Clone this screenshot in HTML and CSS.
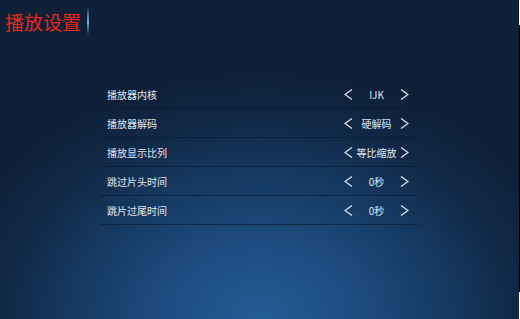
FILE: index.html
```html
<!DOCTYPE html>
<html lang="zh-CN">
<head>
<meta charset="utf-8">
<title>播放设置</title>
<link rel="stylesheet" href="styles.css">
</head>
<body>
<div class="screen">
  <main class="panel">
    <header class="titlebar">
      <h1 class="title">播放设置</h1>
      <span class="divider"></span>
    </header>
    <ul class="settings">
      <li class="row">
        <span class="label">播放器内核</span>
        <span class="control">
          <svg class="arrow" viewBox="0 0 9 11" width="9" height="11"><polyline points="8,0.5 1,5.5 8,10.5"/></svg>
          <span class="value">IJK</span>
          <svg class="arrow" viewBox="0 0 9 11" width="9" height="11"><polyline points="1,0.5 8,5.5 1,10.5"/></svg>
        </span>
      </li>
      <li class="row">
        <span class="label">播放器解码</span>
        <span class="control">
          <svg class="arrow" viewBox="0 0 9 11" width="9" height="11"><polyline points="8,0.5 1,5.5 8,10.5"/></svg>
          <span class="value">硬解码</span>
          <svg class="arrow" viewBox="0 0 9 11" width="9" height="11"><polyline points="1,0.5 8,5.5 1,10.5"/></svg>
        </span>
      </li>
      <li class="row">
        <span class="label">播放显示比列</span>
        <span class="control">
          <svg class="arrow" viewBox="0 0 9 11" width="9" height="11"><polyline points="8,0.5 1,5.5 8,10.5"/></svg>
          <span class="value">等比缩放</span>
          <svg class="arrow" viewBox="0 0 9 11" width="9" height="11"><polyline points="1,0.5 8,5.5 1,10.5"/></svg>
        </span>
      </li>
      <li class="row">
        <span class="label">跳过片头时间</span>
        <span class="control">
          <svg class="arrow" viewBox="0 0 9 11" width="9" height="11"><polyline points="8,0.5 1,5.5 8,10.5"/></svg>
          <span class="value">0秒</span>
          <svg class="arrow" viewBox="0 0 9 11" width="9" height="11"><polyline points="1,0.5 8,5.5 1,10.5"/></svg>
        </span>
      </li>
      <li class="row">
        <span class="label">跳片过尾时间</span>
        <span class="control">
          <svg class="arrow" viewBox="0 0 9 11" width="9" height="11"><polyline points="8,0.5 1,5.5 8,10.5"/></svg>
          <span class="value">0秒</span>
          <svg class="arrow" viewBox="0 0 9 11" width="9" height="11"><polyline points="1,0.5 8,5.5 1,10.5"/></svg>
        </span>
      </li>
    </ul>
  </main>
  <div class="edge">
    <span class="edge-top"></span>
    <span class="edge-mid"></span>
    <span class="edge-bottom"></span>
  </div>
</div>
</body>
</html>
```

FILE: styles.css
```css
html, body {
  margin: 0;
  padding: 0;
  background: #0e1f38;
}

.screen {
  display: flex;
  width: 520px;
  height: 319px;
  overflow: hidden;
  font-family: "Noto Sans CJK SC", "Noto Sans", sans-serif;
  background:
    radial-gradient(ellipse 62% 78% at 50% 100%, #225c92 0%, #1c4d7e 30%, #163b65 55%, #102846 80%, rgba(14,31,56,0) 100%),
    #0e1f38;
}

.panel {
  flex: 1;
  display: flex;
  flex-direction: column;
}

.titlebar {
  display: flex;
  align-items: center;
  height: 28px;
  padding: 7px 0 0 5px;
}

.title {
  margin: 0;
  font-size: 19px;
  line-height: 1;
  font-weight: normal;
  color: #e8281a;
}

.divider {
  width: 1.5px;
  height: 28px;
  margin-left: 6px;
  background: linear-gradient(to bottom, rgba(110,180,235,0) 0%, rgba(100,170,225,0.75) 35%, rgba(130,195,240,0.85) 55%, rgba(110,180,235,0) 100%);
}

.settings {
  list-style: none;
  margin: 45px 0 0 100px;
  padding: 0;
  width: 318px;
}

.row {
  display: flex;
  align-items: center;
  justify-content: space-between;
  height: 28px;
  padding: 0 9px 0 7px;
  border-bottom: 1px solid rgba(10, 22, 42, 0.6);
}

.label {
  font-size: 10px;
  color: #e3e7ed;
}

.control {
  display: flex;
  align-items: center;
}

.arrow {
  display: block;
  fill: none;
  stroke: #dfe3e9;
  stroke-width: 1.3;
}

.value {
  width: 47px;
  text-align: center;
  font-size: 10px;
  color: #e3e7ed;
}

.edge {
  width: 1px;
  display: flex;
  flex-direction: column;
}

.edge-top {
  height: 25px;
  background: #ffffff;
}

.edge-mid {
  flex: 1;
  background: #000000;
}

.edge-bottom {
  height: 27px;
  background: #ffffff;
}
```
